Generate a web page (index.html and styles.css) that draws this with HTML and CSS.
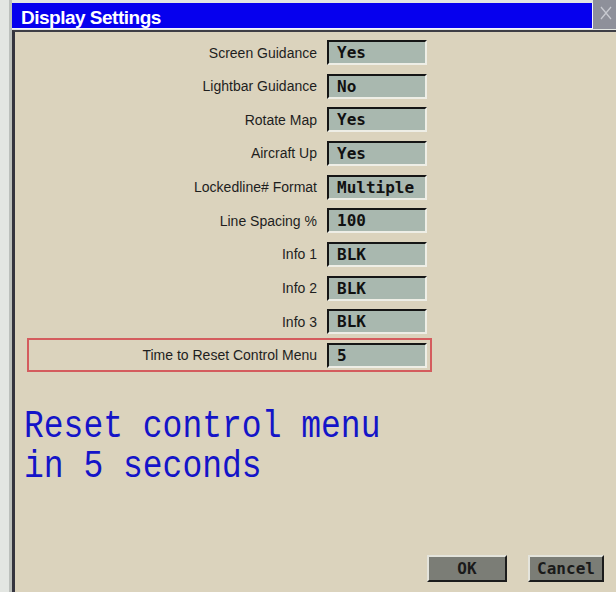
FILE: index.html
```html
<!DOCTYPE html>
<html>
<head>
<meta charset="utf-8">
<title>Display Settings</title>
<link rel="stylesheet" href="styles.css">
</head>
<body>
<div class="window">
  <div class="titlerow">
    <div class="title">Display Settings</div>
    <div class="close">
      <svg width="23" height="29" viewBox="0 0 23 29"><path d="M8 7 L18 19 M8 19 L18 7" stroke="#c8cad0" stroke-width="1.3" fill="none"/></svg>
    </div>
  </div>
  <div class="panel">
    <div class="rows">
      <div class="row"><span class="label">Screen Guidance</span><span class="field">Yes</span></div>
      <div class="row"><span class="label">Lightbar Guidance</span><span class="field">No</span></div>
      <div class="row"><span class="label">Rotate Map</span><span class="field">Yes</span></div>
      <div class="row"><span class="label">Aircraft Up</span><span class="field">Yes</span></div>
      <div class="row"><span class="label">Lockedline# Format</span><span class="field">Multiple</span></div>
      <div class="row"><span class="label">Line Spacing %</span><span class="field">100</span></div>
      <div class="row"><span class="label">Info 1</span><span class="field">BLK</span></div>
      <div class="row"><span class="label">Info 2</span><span class="field">BLK</span></div>
      <div class="row"><span class="label">Info 3</span><span class="field">BLK</span></div>
      <div class="row highlight"><span class="label">Time to Reset Control Menu</span><span class="field">5</span></div>
    </div>
    <div class="message">Reset control menu<br>in 5 seconds</div>
    <div class="buttons">
      <button class="btn ok">OK</button>
      <button class="btn cancel">Cancel</button>
    </div>
  </div>
</div>
</body>
</html>
```
FILE: styles.css
```css
html, body {
  margin: 0;
  padding: 0;
}

body {
  width: 616px;
  height: 592px;
  overflow: hidden;
  background: #e3e6e2;
}

.window {
  margin-left: 9px;
  border-left: 3px solid #bcc0bc;
  height: 592px;
  display: flex;
  flex-direction: column;
}

.titlerow {
  display: flex;
  height: 29px;
  flex: none;
}

.title {
  flex: 1;
  margin-top: 3px;
  height: 20px;
  padding: 5px 0 0 9px;
  line-height: 20px;
  background: #0600ee;
  border-bottom: 1px solid #f4f4ff;
  border-right: 1px solid #f4f4ff;
  color: #fff;
  font-family: "Liberation Sans", Arial, sans-serif;
  font-weight: bold;
  font-size: 19px;
  letter-spacing: -0.5px;
}

.close {
  width: 23px;
  background: #8e909a;
}

.close svg {
  display: block;
}

.panel {
  flex: 1;
  margin-top: 1px;
  border-top: 2px solid #3e3e46;
  border-left: 3px solid #34343e;
  background: #dbd3bd;
  display: flex;
  flex-direction: column;
}

.rows {
  width: 412px;
  padding-top: 8px;
  display: flex;
  flex-direction: column;
  gap: 8.67px;
}

.row {
  display: flex;
  align-items: center;
  gap: 10px;
}

.label {
  flex: 1;
  text-align: right;
  font-family: "Liberation Sans", Arial, sans-serif;
  font-size: 14px;
  color: #1e1e1e;
}

.field {
  box-sizing: border-box;
  width: 100px;
  height: 25px;
  padding-left: 8px;
  line-height: 21px;
  background: #a9b8af;
  border-top: 2px solid #151515;
  border-left: 2px solid #151515;
  border-bottom: 2px solid #eeeee6;
  border-right: 2px solid #eeeee6;
  font-family: "DejaVu Sans Mono", monospace;
  font-weight: bold;
  font-size: 16px;
  color: #111;
}

.row.highlight {
  margin: -5px -5px -4px 12px;
  padding: 3px 3px 2px 0;
  border: 2px solid #d45c5e;
}

.message {
  margin: 39px 0 0 9px;
  font-family: "Liberation Mono", "Courier New", monospace;
  font-size: 33px;
  line-height: 35px;
  color: #1414c8;
  transform: scaleY(1.15);
  transform-origin: top left;
}

.buttons {
  margin-top: auto;
  padding: 0 12px 10px 0;
  display: flex;
  justify-content: flex-end;
  gap: 21px;
}

.btn {
  box-sizing: border-box;
  height: 27px;
  padding: 0;
  background: #7b7d76;
  border-top: 2px solid #e4e4dc;
  border-left: 2px solid #e4e4dc;
  border-bottom: 2px solid #1c1c1c;
  border-right: 2px solid #1c1c1c;
  font-family: "DejaVu Sans Mono", monospace;
  font-weight: bold;
  font-size: 16px;
  color: #1a1a1a;
}

.btn.ok {
  width: 80px;
}

.btn.cancel {
  width: 76px;
}
```
